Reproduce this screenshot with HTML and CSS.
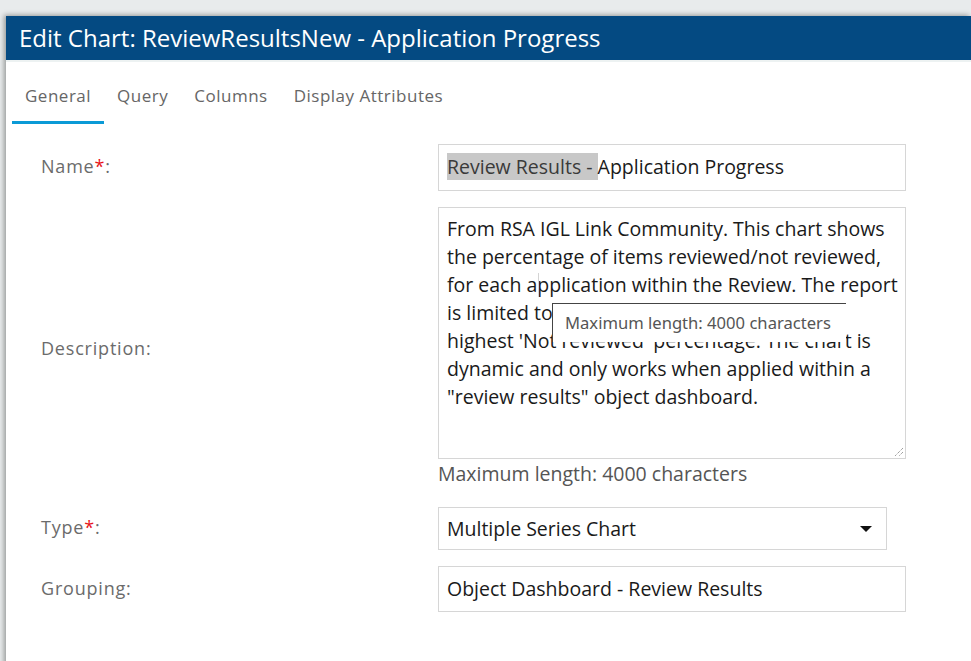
FILE: index.html
```html
<!DOCTYPE html>
<html>
<head>
<meta charset="utf-8">
<link rel="stylesheet" href="styles.css">
</head>
<body>
<div class="dialog">
  <div class="titlebar">Edit Chart: ReviewResultsNew - Application Progress</div>
  <div class="tabs">
    <div class="tab active">General</div>
    <div class="tab">Query</div>
    <div class="tab">Columns</div>
    <div class="tab">Display Attributes</div>
  </div>
  <div class="form">
    <div class="label">Name<span class="req">*</span>:</div>
    <div class="field"><div class="input"><span class="sel">Review Results - </span>Application Progress</div></div>

    <div class="label">Description:</div>
    <div class="field">
      <div class="textarea-wrap">
        <div class="textarea">From RSA IGL Link Community. This chart shows the percentage of items reviewed/not reviewed, for each application within the Review. The report is limited to the top 10 applications with the highest 'Not reviewed' percentage. The chart is dynamic and only works when applied within a "review results" object dashboard.</div>
        <svg class="grip" width="12" height="12" viewBox="0 0 12 12"><path d="M11 3 L3 11 M11 7 L7 11" stroke="#777" stroke-width="1" stroke-dasharray="1 1" fill="none"/></svg>
        <span class="ibeam"></span>
        <div class="tooltip">Maximum length: 4000 characters</div>
      </div>
      <div class="hint">Maximum length: 4000 characters</div>
    </div>

    <div class="label">Type<span class="req">*</span>:</div>
    <div class="field"><div class="select"><span>Multiple Series Chart</span><span class="caret"></span></div></div>

    <div class="label">Grouping:</div>
    <div class="field"><div class="input grouping">Object Dashboard - Review Results</div></div>
  </div>
</div>
</body>
</html>
```
FILE: styles.css
```css
* { box-sizing: border-box; }
html, body { height: 100%; }
body {
  margin: 0;
  background: #e8ebec;
  font-family: "Open Sans", "Noto Sans", sans-serif;
  overflow: hidden;
}
.dialog {
  margin: 16px 0 0 6px;
  height: 700px;
  background: #fff;
  box-shadow: -2px -1px 5px rgba(0,0,0,0.35);
}
.titlebar {
  height: 44px;
  background: #044a82;
  color: #fff;
  font-size: 24px;
  line-height: 44px;
  padding-left: 13px;
  border-bottom: 2px solid #edf2f2;
  box-sizing: content-box;
}
.tabs {
  display: flex;
  padding: 0 0 0 6px;
  margin-top: 22px;
}
.tab {
  padding: 3px 13px 0;
  height: 40px;
  line-height: 17px;
  font-size: 17px;
  letter-spacing: 0.5px;
  color: #666;
  border-bottom: 3px solid transparent;
}
.tab.active { border-bottom-color: #0b9ad6; }
.form {
  display: grid;
  grid-template-columns: 397px 468px;
  align-items: center;
  row-gap: 16px;
  margin-top: 20px;
  padding-left: 35px;
}
.label {
  font-size: 18px;
  color: #6b6b6b;
  letter-spacing: 0.8px;
  margin-top: -3px;
}
.req { color: #e8141a; }
.input {
  height: 47px;
  border: 1px solid #d6d6d6;
  padding: 0 8px;
  font-size: 19.5px;
  line-height: 43px;
  color: #1a1a1a;
}
.sel { background: #c8c8c8; color: #3a3a3a; }
.grouping { height: 46px; line-height: 43px; }
.textarea-wrap { position: relative; }
.textarea {
  height: 252px;
  border: 1px solid #d6d6d6;
  padding: 7px 2px 7px 8px;
  font-size: 19.5px;
  line-height: 28px;
  color: #1a1a1a;
}
.grip { position: absolute; right: 2px; bottom: 2px; }
.ibeam {
  position: absolute;
  left: 100px; top: 66px;
  width: 1px; height: 24px;
  background: #d4d4d4;
}
.tooltip {
  position: absolute;
  left: 114px; top: 96px;
  width: 294px; height: 39px;
  background: #fff;
  border-top: 1px solid #444;
  border-left: 1px solid #444;
  font-family: "Noto Sans", "Open Sans", sans-serif;
  font-size: 16.6px;
  color: #555;
  padding: 8px 0 0 12px;
  line-height: 22px;
}
.hint {
  font-size: 19.5px;
  color: #555;
  margin-top: 2px;
  line-height: 26px;
  margin-bottom: 4px;
}
.select {
  width: 449px;
  height: 43px;
  border: 1px solid #d6d6d6;
  display: flex;
  align-items: center;
  justify-content: space-between;
  padding: 0 14px 0 8px;
  font-size: 19.5px;
  color: #1a1a1a;
}
.caret {
  width: 0; height: 0;
  border-left: 6px solid transparent;
  border-right: 6px solid transparent;
  border-top: 6px solid #111;
}
```
